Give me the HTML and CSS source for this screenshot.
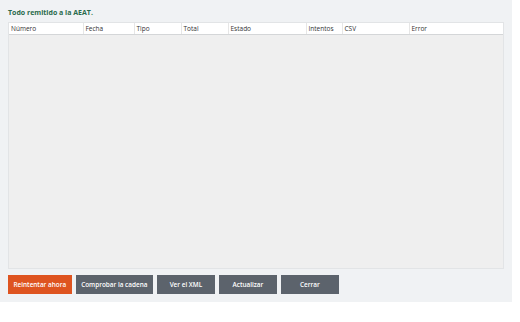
FILE: index.html
```html
<!DOCTYPE html>
<html lang="es">
<head>
    <meta charset="UTF-8">
    <meta name="viewport" content="width=device-width, initial-scale=1.0">
    <title>Remisión AEAT</title>
    <link rel="stylesheet" href="styles.css">
</head>
<body>
    <div class="panel">
        <div class="status">Todo remitido a la AEAT.</div>

        <div class="grid">
            <table class="records">
                <colgroup>
                    <col style="width: 74px">
                    <col style="width: 51px">
                    <col style="width: 47px">
                    <col style="width: 47px">
                    <col style="width: 78px">
                    <col style="width: 36px">
                    <col style="width: 67px">
                    <col>
                </colgroup>
                <thead>
                    <tr>
                        <th>Número</th>
                        <th>Fecha</th>
                        <th>Tipo</th>
                        <th>Total</th>
                        <th>Estado</th>
                        <th>Intentos</th>
                        <th>CSV</th>
                        <th>Error</th>
                    </tr>
                </thead>
                <tbody>
                    <!-- no hay registros pendientes -->
                </tbody>
            </table>
        </div>

        <div class="actions">
            <button class="button button-retry">Reintentar ahora</button>
            <button class="button">Comprobar la cadena</button>
            <button class="button">Ver el XML</button>
            <button class="button">Actualizar</button>
            <button class="button">Cerrar</button>
        </div>
    </div>
</body>
</html>
```

FILE: styles.css
```css
body {
    margin: 0;
    padding: 0;
    background-color: #ffffff;
    font-family: 'Open Sans', 'Noto Sans', sans-serif;
    color: #2C3E50;
}
.panel {
    width: 512px;
    height: 302px;
    box-sizing: border-box;
    padding: 8px 8px 0 8px;
    background-color: #f0f2f4;
    display: flex;
    flex-direction: column;
}
.status {
    font-size: 7px;
    font-weight: bold;
    color: #2a6a4c;
    height: 14px;
    line-height: 10px;
}
.grid {
    width: 496px;
    height: 247px;
    box-sizing: border-box;
    border: 1px solid #e2e4e6;
    background-color: #efefef;
}
.records {
    width: 100%;
    border-collapse: collapse;
    table-layout: fixed;
}
.records th {
    height: 11px;
    padding: 0 0 0 2px;
    background-color: #ffffff;
    border-right: 1px solid #e6e6e6;
    border-bottom: 1px solid #d4d6d8;
    font-size: 6.5px;
    font-weight: normal;
    color: #333333;
    text-align: left;
    white-space: nowrap;
    overflow: hidden;
}
.records th:last-child {
    border-right: none;
}
.actions {
    display: flex;
    gap: 4px;
    margin-top: 6px;
}
.button {
    height: 19px;
    min-width: 58px;
    padding: 0 5.5px;
    border: none;
    border-radius: 0;
    background-color: #5c636c;
    color: #ffffff;
    font-family: 'Open Sans', 'Noto Sans', sans-serif;
    font-size: 6.4px;
    font-weight: 600;
    cursor: pointer;
}
.button-retry {
    background-color: #de5420;
}
```
